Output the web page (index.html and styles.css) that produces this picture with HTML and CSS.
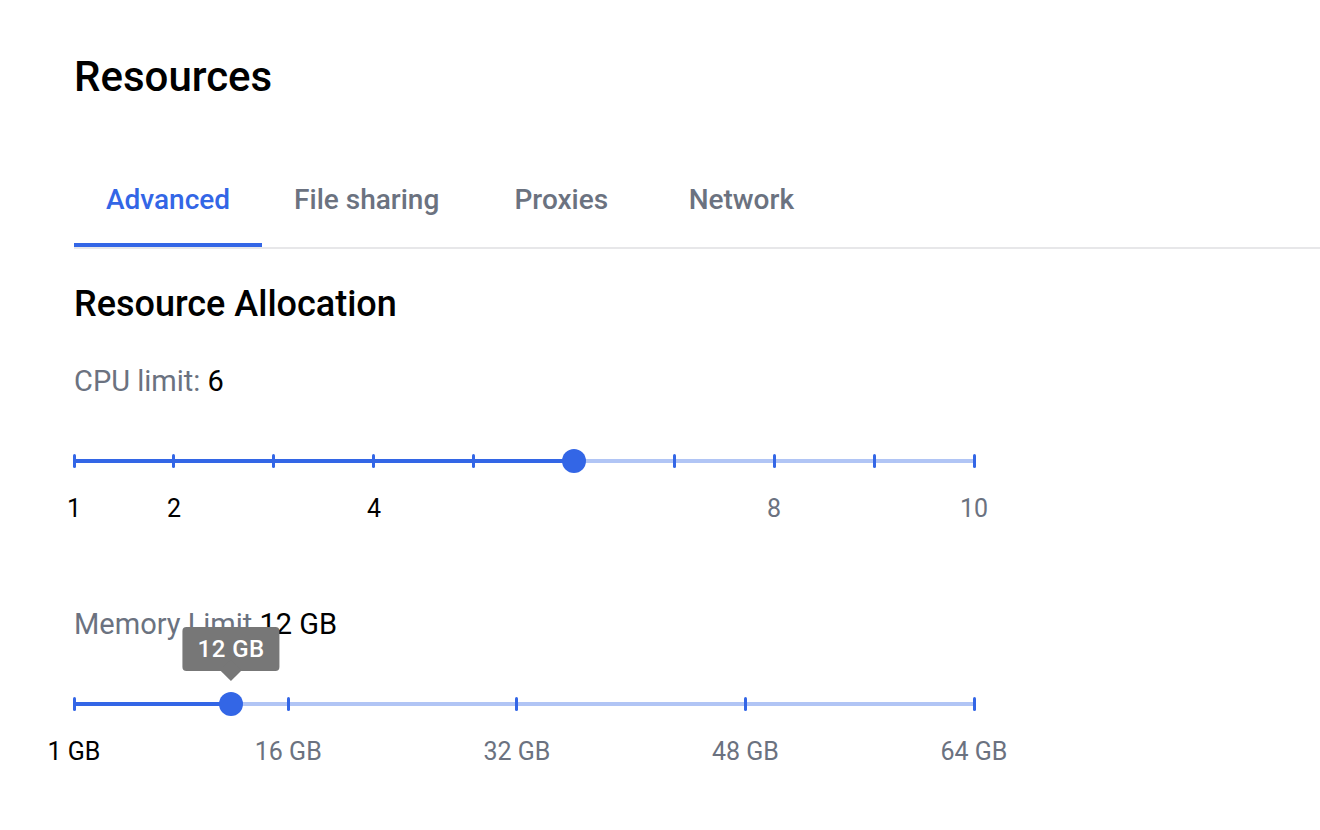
FILE: index.html
```html
<!DOCTYPE html>
<html lang="en">
<head>
  <meta charset="UTF-8" />
  <meta name="viewport" content="width=device-width, initial-scale=1.0"/>
  <title>Resources</title>
  <link rel="stylesheet" href="styles.css">
</head>
<body>

  <main class="page">
    <h1 class="title">Resources</h1>

    <nav class="tabs">
      <button class="tab active">Advanced</button>
      <button class="tab">File sharing</button>
      <button class="tab">Proxies</button>
      <button class="tab">Network</button>
    </nav>

    <section class="panel">
      <h2>Resource Allocation</h2>

      <!-- CPU -->
      <div class="field">
        <div class="field-label">CPU limit: <span class="value">6</span></div>
        <div class="slider">
          <span class="rail"></span>
          <span class="track" style="width: 55.556%"></span>
          <span class="mark" style="left: 0%"></span>
          <span class="mark" style="left: 11.111%"></span>
          <span class="mark" style="left: 22.222%"></span>
          <span class="mark" style="left: 33.333%"></span>
          <span class="mark" style="left: 44.444%"></span>
          <span class="mark" style="left: 55.556%"></span>
          <span class="mark" style="left: 66.667%"></span>
          <span class="mark" style="left: 77.778%"></span>
          <span class="mark" style="left: 88.889%"></span>
          <span class="mark" style="left: 100%"></span>
          <span class="mark-label active" style="left: 0%">1</span>
          <span class="mark-label active" style="left: 11.111%">2</span>
          <span class="mark-label active" style="left: 33.333%">4</span>
          <span class="mark-label" style="left: 77.778%">8</span>
          <span class="mark-label" style="left: 100%">10</span>
          <span class="thumb" style="left: 55.556%"></span>
        </div>
      </div>

      <!-- MEMORY -->
      <div class="field">
        <div class="field-label">Memory Limit <span class="value">12 GB</span></div>
        <div class="slider">
          <span class="rail"></span>
          <span class="track" style="width: 17.46%"></span>
          <span class="mark" style="left: 0%"></span>
          <span class="mark" style="left: 23.81%"></span>
          <span class="mark" style="left: 49.206%"></span>
          <span class="mark" style="left: 74.603%"></span>
          <span class="mark" style="left: 100%"></span>
          <span class="mark-label active" style="left: 0%">1 GB</span>
          <span class="mark-label" style="left: 23.81%">16 GB</span>
          <span class="mark-label" style="left: 49.206%">32 GB</span>
          <span class="mark-label" style="left: 74.603%">48 GB</span>
          <span class="mark-label" style="left: 100%">64 GB</span>
          <span class="thumb" style="left: 17.46%">
            <span class="value-label">12 GB</span>
          </span>
        </div>
      </div>
    </section>
  </main>

</body>
</html>
```

FILE: styles.css
```css
/* RESET & GLOBAL */
* {
  margin: 0; padding: 0; box-sizing: border-box;
  font-family: Roboto, 'Liberation Sans', sans-serif;
}
body {
  background: #fff;
  color: #000;
}
.page {
  padding: 52px 0 0 74px;
}
.title {
  font-size: 42px; line-height: 50px;
  font-weight: 500;
}

/* TABS */
.tabs {
  display: flex;
  margin-top: 49px;
  border-bottom: 2px solid #e7e7e9;
}
.tab {
  position: relative;
  min-width: 180px; height: 96px;
  padding: 0 32px;
  border: none; background: none;
  font-size: 28px; font-weight: 500;
  color: #6b7280;
  cursor: pointer;
}
.tab.active { color: #3366e6; }
.tab.active::after {
  content: "";
  position: absolute; left: 0; right: 0; bottom: 0;
  height: 4px;
  background: #3366e6;
}

/* PANEL */
.panel h2 {
  margin-top: 33px;
  font-size: 36px; line-height: 44px;
  font-weight: 500;
}
.field { width: 900px; }
.field-label {
  margin-top: 37px;
  font-size: 29px; line-height: 36px;
  color: #6b7280;
}
.field-label .value { color: #000; }
.field + .field .field-label { margin-top: 77px; }

/* SLIDER */
.slider {
  position: relative;
  height: 80px;
  margin-top: 50px;
}
.rail, .track {
  position: absolute; left: 0; top: 10px;
  height: 4px;
  background: #3366e6;
}
.rail { width: 100%; opacity: .38; }
.mark {
  position: absolute; top: 5px;
  width: 3px; height: 14px;
  margin-left: -1.5px;
  border-radius: 2px;
  background: #3366e6;
}
.mark-label {
  position: absolute; top: 44px;
  transform: translateX(-50%);
  font-size: 25px; line-height: 32px;
  white-space: nowrap;
  color: #6b7280;
}
.mark-label.active { color: #000; }
.thumb {
  position: absolute; top: 0;
  width: 24px; height: 24px;
  margin-left: -12px;
  border-radius: 50%;
  background: #3366e6;
}

/* VALUE TOOLTIP */
.value-label {
  position: absolute; left: 50%; bottom: calc(100% + 21px);
  transform: translateX(-50%);
  padding: 7px 15px;
  border-radius: 4px;
  background: #777;
  color: #fff;
  font-size: 24px; line-height: 30px;
  font-weight: 500; letter-spacing: .02em;
  white-space: nowrap;
}
.value-label::after {
  content: "";
  position: absolute; left: 50%; bottom: -7px;
  width: 15px; height: 15px;
  margin-left: -7.5px;
  background: #777;
  transform: rotate(45deg);
  z-index: -1;
}
```
